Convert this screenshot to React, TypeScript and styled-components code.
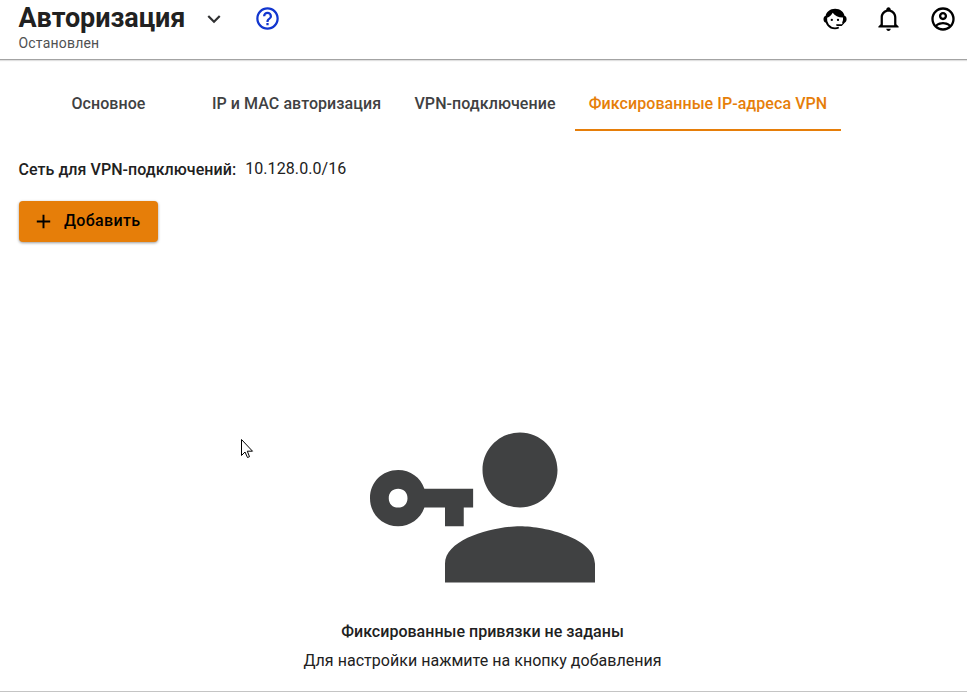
import React from "react";
import styled, { createGlobalStyle } from "styled-components";

const GlobalStyle = createGlobalStyle`
  * { box-sizing: border-box; }
  body {
    margin: 0;
    background: #fff;
    color: #212121;
    font-family: Roboto, "Liberation Sans", sans-serif;
  }
`;

const paths = {
  chevron: "M7.41,8.58L12,13.17L16.59,8.58L18,10L12,16L6,10L7.41,8.58Z",
  help: "M11,18H13V16H11V18M12,2A10,10 0 0,0 2,12A10,10 0 0,0 12,22A10,10 0 0,0 22,12A10,10 0 0,0 12,2M12,20C7.59,20 4,16.41 4,12C4,7.59 7.59,4 12,4C16.41,4 20,7.59 20,12C20,16.41 16.41,20 12,20M12,6A4,4 0 0,0 8,10H10A2,2 0 0,1 12,8A2,2 0 0,1 14,10C14,12 11,11.75 11,15H13C13,12.75 16,12.5 16,10A4,4 0 0,0 12,6Z",
  bell: "M10 21H14C14 22.1 13.1 23 12 23S10 22.1 10 21M21 19V20H3V19L5 17V11C5 7.9 7 5.2 10 4.3V4C10 2.9 10.9 2 12 2S14 2.9 14 4V4.3C17 5.2 19 7.9 19 11V17L21 19M17 11C17 8.2 14.8 6 12 6S7 8.2 7 11V18H17V11Z",
  account: "M12,2A10,10 0 0,0 2,12A10,10 0 0,0 12,22A10,10 0 0,0 22,12A10,10 0 0,0 12,2M7.07,18.28C7.5,17.38 10.12,16.5 12,16.5C13.88,16.5 16.5,17.38 16.93,18.28C15.57,19.36 13.86,20 12,20C10.14,20 8.43,19.36 7.07,18.28M18.36,16.83C16.93,15.09 13.46,14.5 12,14.5C10.54,14.5 7.07,15.09 5.64,16.83C4.62,15.5 4,13.82 4,12C4,7.59 7.59,4 12,4C16.41,4 20,7.59 20,12C20,13.82 19.38,15.5 18.36,16.83M12,6C10.06,6 8.5,7.56 8.5,9.5C8.5,11.44 10.06,13 12,13C13.94,13 15.5,11.44 15.5,9.5C15.5,7.56 13.94,6 12,6M12,11A1.5,1.5 0 0,1 10.5,9.5A1.5,1.5 0 0,1 12,8A1.5,1.5 0 0,1 13.5,9.5A1.5,1.5 0 0,1 12,11Z",
  plus: "M19,13H13V19H11V13H5V11H11V5H13V11H19V13Z",
};

const Svg = styled.svg<{ $size: number }>`
  display: block;
  flex: none;
  width: ${(p) => p.$size}px;
  height: ${(p) => p.$size}px;
  fill: currentColor;
`;

const Icon = ({ name, size }: { name: keyof typeof paths; size: number }) => (
  <Svg $size={size} viewBox="0 0 24 24" aria-hidden>
    <path d={paths[name]} />
  </Svg>
);

const AgentIcon = () => (
  <Svg $size={28} viewBox="0 0 28 28" aria-hidden>
    <path d="M4.5 11.5C5.2 7 9 3.800 14.100 3.800c5.100 0 9 3.200 9.700 8l-1.300.8c-5 .2-8.500-1.500-10.800-4.800-1 2.200-3.100 4.200-5.700 5z" />
    <path
      d="M5.200 12c-.8 6.500 3 11.300 8.800 11.300 1.600 0 2.700-.3 3.800-.8M22.900 12c.3 2.300 0 4.500-1 6.200"
      fill="none"
      stroke="currentColor"
      strokeWidth="1.800"
    />
    <path d="M5.500 11H4.200C3 11.500 2.500 12.800 2.500 14.200s.6 2.800 1.700 3.300h1.500zM22.500 11H24c1.200.5 1.600 1.800 1.600 3.200s-.6 2.800-1.700 3.300L20.700 21h-4.500c-.7 0-1.200-.4-1.200-.9s.5-.9 1.200-.9h4.600l1.700-2.200z" />
    <circle cx="10.800" cy="14.900" r="1.150" />
    <circle cx="17" cy="14.900" r="1.150" />
  </Svg>
);

const Page = styled.div`
  display: flex;
  flex-direction: column;
  height: 692px;
  overflow: hidden;
  border-bottom: 1px solid #c4c4c4;
`;

const Header = styled.header`
  display: flex;
  justify-content: space-between;
  flex: none;
  height: 60px;
  padding: 0 10.500px 0 18.500px;
  border-bottom: 1px solid #a3a3a3;
  box-shadow: 0 1px 1px rgba(0, 0, 0, 0.12);
`;

const TitleRow = styled.div`
  display: flex;
  align-items: center;
  height: 36px;
`;

const Title = styled.h1`
  margin: 0;
  width: 182px;
  font-size: 27px;
  line-height: 36px;
  font-weight: 700;
  letter-spacing: -0.05px;
  white-space: nowrap;
`;

const Status = styled.div`
  font-size: 14px;
  line-height: 14px;
  color: #505152;
  letter-spacing: 0.2px;
`;

const IconButton = styled.button<{ $color?: string; $gap?: number }>`
  display: flex;
  margin: 0 0 0 ${(p) => p.$gap ?? 0}px;
  padding: 1px 0 0;
  border: 0;
  background: none;
  color: ${(p) => p.$color ?? "#000"};
`;

const Actions = styled.div`
  display: flex;
  align-items: center;
  height: 36px;
`;

const Tabs = styled.nav`
  display: flex;
  flex: none;
  height: 55px;
  margin: 16px 0 0 19px;
`;

const Tab = styled.button<{ $width: number; $active?: boolean }>`
  width: ${(p) => p.$width}px;
  padding: 3px 0 0;
  border: 0;
  border-bottom: 2px solid ${(p) => (p.$active ? "#e67e09" : "transparent")};
  background: none;
  color: ${(p) => (p.$active ? "#e67e09" : "#404142")};
  font: 500 16px/20px Roboto, "Liberation Sans", sans-serif;
  letter-spacing: 0.07px;
  white-space: nowrap;
`;

const Network = styled.div`
  display: flex;
  align-items: center;
  flex: none;
  gap: 9px;
  margin: 28px 0 0 18.500px;
  height: 20px;
  font-size: 16px;
  line-height: 20px;
`;

const Label = styled.span`
  font-weight: 500;
  padding-top: 1px;
  letter-spacing: 0.05px;
`;

const Value = styled.span`
  letter-spacing: 0.08px;
`;

const AddButton = styled.button`
  display: flex;
  align-items: center;
  flex: none;
  gap: 9px;
  width: 139px;
  height: 41px;
  margin: 22px 0 0 19px;
  padding: 0 0 0 13px;
  border: 0;
  border-radius: 4px;
  background: #e67e09;
  color: #000;
  box-shadow: 0 1px 3px rgba(0, 0, 0, 0.4);
  font: 500 16px/20px Roboto, "Liberation Sans", sans-serif;
  letter-spacing: 0.35px;
`;

const ButtonText = styled.span`
  padding-bottom: 2px;
`;

const Empty = styled.section`
  display: flex;
  flex-direction: column;
  align-items: center;
  margin-top: 190px;
  padding-right: 2px;
  font-size: 16px;
  line-height: 20px;
`;

const EmptyArt = styled.svg`
  display: block;
  width: 225px;
  height: 151px;
  fill: #404142;
`;

const EmptyTitle = styled.strong`
  margin-top: 39px;
  font-weight: 500;
  letter-spacing: 0.02px;
`;

const EmptyText = styled.p`
  margin: 9px 0 0;
  letter-spacing: 0.03px;
`;

const Pointer = styled.svg`
  position: absolute;
  left: 240px;
  top: 438px;
  width: 14px;
  height: 22px;
`;

const tabs = [
  { label: "Основное", width: 179 },
  { label: "IP и MAC авторизация", width: 197 },
  { label: "VPN-подключение", width: 180 },
  { label: "Фиксированные IP-адреса VPN", width: 266, active: true },
];

export default function App() {
  return (
    <Page>
      <GlobalStyle />
      <Header>
        <div>
          <TitleRow>
            <Title>Авторизация</Title>
            <IconButton $color="#303132" aria-label="Меню">
              <Icon name="chevron" size={26} />
            </IconButton>
            <IconButton $color="#1236cf" $gap={27} aria-label="Справка">
              <Icon name="help" size={27} />
            </IconButton>
          </TitleRow>
          <Status>Остановлен</Status>
        </div>
        <Actions>
          <IconButton aria-label="Поддержка"><AgentIcon /></IconButton>
          <IconButton $gap={26} aria-label="Уведомления"><Icon name="bell" size={27} /></IconButton>
          <IconButton $gap={27} aria-label="Профиль"><Icon name="account" size={28} /></IconButton>
        </Actions>
      </Header>
      <Tabs>
        {tabs.map((t) => (
          <Tab key={t.label} $width={t.width} $active={t.active}>{t.label}</Tab>
        ))}
      </Tabs>
      <Network>
        <Label>Сеть для VPN-подключений:</Label>
        <Value>10.128.0.0/16</Value>
      </Network>
      <AddButton>
        <Icon name="plus" size={23} />
        <ButtonText>Добавить</ButtonText>
      </AddButton>
      <Empty>
        <EmptyArt viewBox="0 4 24 16" aria-hidden>
          <path d="M11 10v2h-1v2H8v-2H5.800c-.4 1.200-1.500 2-2.800 2c-1.700 0-3-1.300-3-3s1.300-3 3-3c1.300 0 2.400.8 2.800 2H11M3 10c-.6 0-1 .4-1 1s.4 1 1 1s1-.4 1-1s-.4-1-1-1m13 4c2.700 0 8 1.300 8 4v2H8v-2c0-2.700 5.300-4 8-4m0-2c-2.200 0-4-1.800-4-4s1.800-4 4-4s4 1.800 4 4s-1.800 4-4 4" />
        </EmptyArt>
        <EmptyTitle>Фиксированные привязки не заданы</EmptyTitle>
        <EmptyText>Для настройки нажмите на кнопку добавления</EmptyText>
      </Empty>
      <Pointer viewBox="0 0 14 22" aria-hidden>
        <path d="M1.500 1.500V17.500L5 14L7.500 19.500L9.500 18.700L7.300 13.200H12.500Z" fill="#fff" stroke="#000" strokeWidth="1" />
      </Pointer>
    </Page>
  );
}
